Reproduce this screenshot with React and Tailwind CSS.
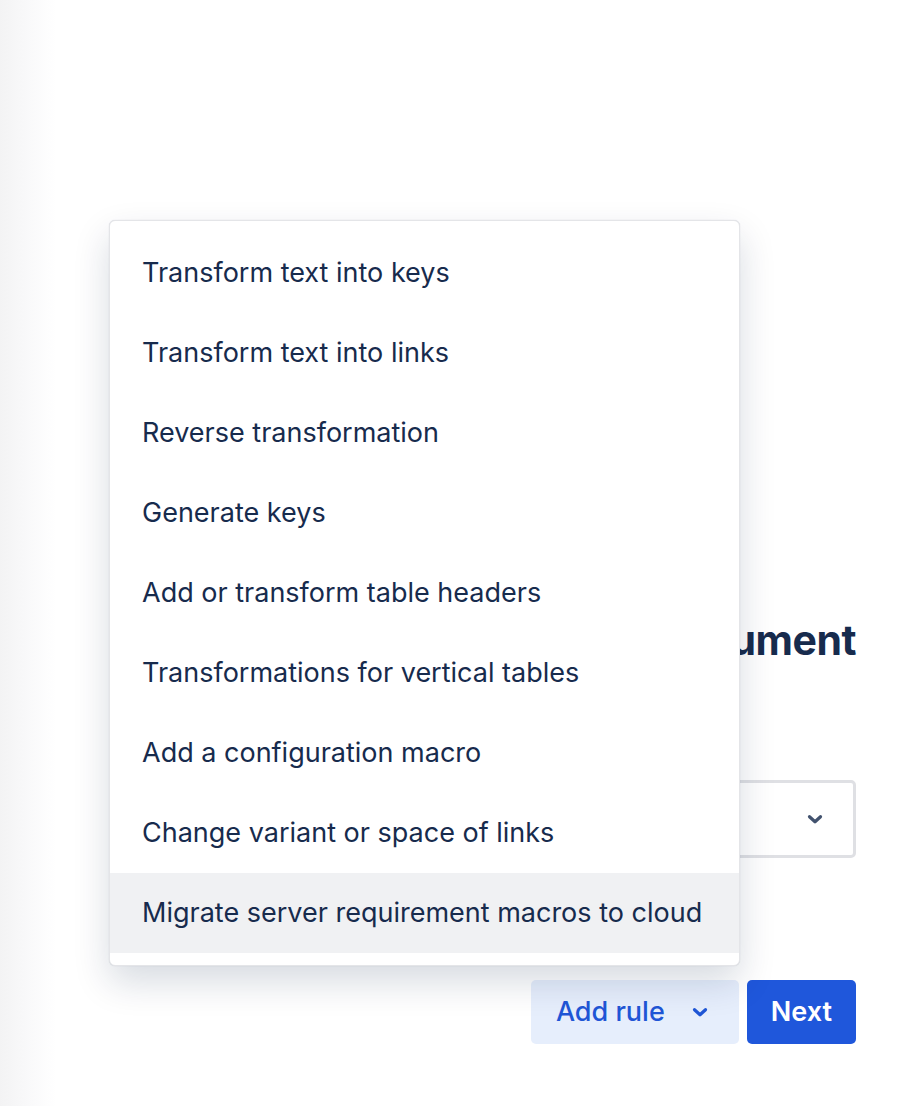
import { useState } from "react";

const RULES = [
  "Transform text into keys",
  "Transform text into links",
  "Reverse transformation",
  "Generate keys",
  "Add or transform table headers",
  "Transformations for vertical tables",
  "Add a configuration macro",
  "Change variant or space of links",
  "Migrate server requirement macros to cloud",
];

function Chevron({ className }) {
  return (
    <svg viewBox="0 0 24 24" className={className} fill="none" stroke="currentColor" strokeWidth="3.5" strokeLinecap="round" strokeLinejoin="round">
      <path d="M6 9.5l6 5.5 6-5.5" />
    </svg>
  );
}

export default function App() {
  const [hovered, setHovered] = useState(8);

  return (
    <div
      className="relative w-[902px] h-[1106px] overflow-hidden bg-white text-[#172b4d]"
      style={{ fontFamily: "Inter, 'Noto Sans', sans-serif" }}
    >
      {/* faint shade from the side panel */}
      <div className="absolute inset-y-0 left-0 w-[56px] bg-linear-to-r from-[#f3f3f4] via-[#f9f9fa] to-white" />

      <div className="relative ml-[150px] mr-[46px] pt-[612px] flex flex-col">
        <h1 className="text-right text-[41px] leading-[56px] font-bold tracking-[-0.5px]">
          Document
        </h1>

        <div className="mt-[112px] h-[78px] rounded-[5px] border-[3px] border-[#dfe0e4] flex items-center justify-end pr-[27px]">
          <Chevron className="w-[22px] h-[22px] text-[#42526e]" />
        </div>

        <div className="mt-[122px] flex justify-end gap-[8px]">
          <button className="h-[64px] pl-[25px] pr-[28px] rounded-[5px] bg-[#e6eefc] text-[#1f56d6] text-[27px] font-medium flex items-center gap-[24px]">
            Add rule
            <Chevron className="w-[22px] h-[22px]" />
          </button>
          <button className="h-[64px] px-[24px] rounded-[5px] bg-[#1f57db] text-white text-[27px] font-semibold">
            Next
          </button>
        </div>
      </div>

      {/* dropdown menu */}
      <div className="absolute left-[109px] top-[220px] w-[631px] py-[12px] rounded-[6px] border border-[#e4e5e8] bg-white shadow-[0_16px_36px_rgba(9,30,66,0.16),0_0_1px_rgba(9,30,66,0.2)]">
        {RULES.map((rule, i) => (
          <div
            key={rule}
            onMouseEnter={() => setHovered(i)}
            className={`h-[80px] flex items-center pl-[32px] text-[27px] ${hovered === i ? "bg-[#f0f1f3]" : ""}`}
          >
            {rule}
          </div>
        ))}
      </div>
    </div>
  );
}
